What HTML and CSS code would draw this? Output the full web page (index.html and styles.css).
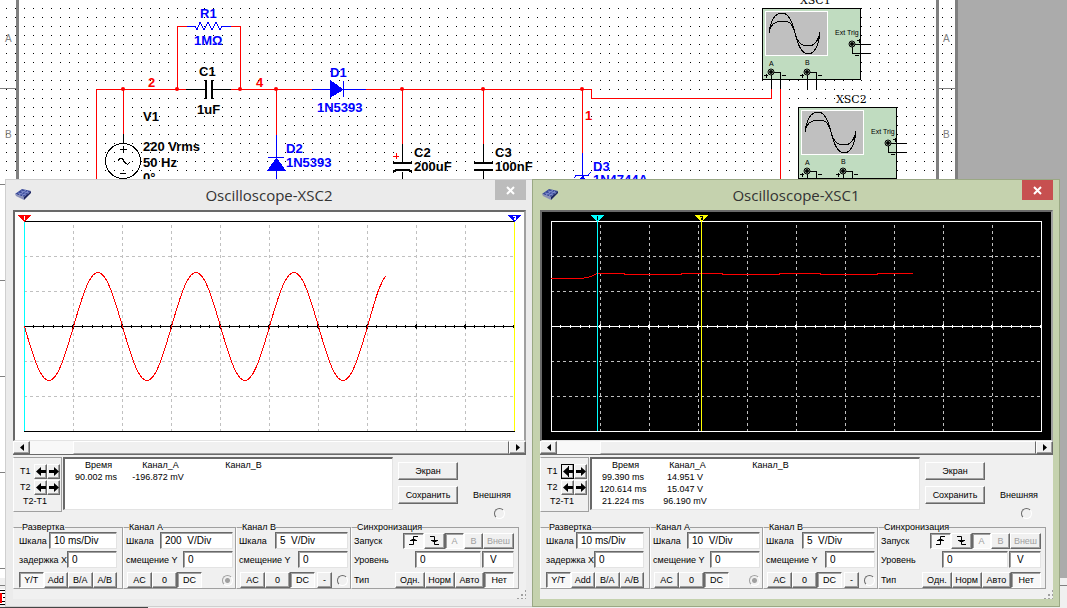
FILE: index.html
```
<!DOCTYPE html>
<html lang="ru">
<head>
<meta charset="utf-8">
<title>Oscilloscope</title>
<link rel="stylesheet" href="styles.css">
</head>

<body>
<!-- shared drawings -->
<svg class="defs" width="0" height="0">
	<defs>
		<pattern id="dots" width="9" height="9" patternUnits="userSpaceOnUse">
			<rect x="6" y="8" width="1" height="1" fill="#000"/>
		</pattern>
		<g id="jack">
			<circle r="3" fill="#c0dcc0" stroke="#000"/>
			<circle r="2" fill="#000"/>
		</g>
		<g id="scope">
			<rect x="0.5" y="0.5" width="98" height="71" fill="#c0dcc0" stroke="#000"/>
			<rect x="3.5" y="3.5" width="62" height="44" fill="#c0c0c0" stroke="#fff"/>
			<path class="crisp" d="M7 25C9 10 14 5 20 5S30 12 33 25S40 46 46 46S57 38 58 24M7 25C9 15 14 13 20 13S30 14 33 25S40 38 46 38S56 34 58 24" fill="none" stroke="#000"/>
			<text x="73" y="27" class="tiny">Ext Trig</text>
			<text x="7" y="58" class="tiny">A</text>
			<text x="43" y="57" class="tiny">B</text>
			<path class="crisp" d="M90.5 36.5H109M90.5 36.5V45.5H109M9.5 64.5V81M9.5 64.5H18.5V81M45.5 64.5V81M45.5 64.5H54.5V81M95 32.5h4M97.5 31v4M93 47.5h4M2 67.5h4M4.5 66v4M20 67.5h4M38 67.5h4M40.5 66v4M56 67.5h4" fill="none" stroke="#000"/>
			<use href="#jack" x="90" y="36"/>
			<use href="#jack" x="9" y="64"/>
			<use href="#jack" x="45" y="64"/>
		</g>
		<g id="chip">
			<path d="M0 6L7 1 16 3 9 9z" fill="#3a4a9a"/>
			<path d="M0 6L9 9V12L1 8z" fill="#8a90b8"/>
			<path d="M9 9L16 3V5L9 12z" fill="#1c2560"/>
			<path d="M3 5l8 2M6 3l8 2M4 7l7-5M7 8l6-5" stroke="#7f8ccc" fill="none"/>
		</g>
		<g id="grid">
			<path d="M57.5 12V218M106.5 12V218M155.5 12V218M204.5 12V218M253.5 12V218M302.5 12V218M351.5 12V218M400.5 12V218M449.5 12V218M8 43.5H498M8 78.5H498M8 148.5H498M8 183.5H498" stroke="#c0c0c0" stroke-dasharray="3 3"/>
		</g>
		<g id="axis">
			<path d="M8 113.5H499"/>
			<path d="M17 113.5H498" stroke-width="3" stroke-dasharray="1 8.8"/>
			<path d="M57 113.5H498" stroke-width="5" stroke-dasharray="1 48"/>
		</g>
		<path id="left" d="M0 5.500L5 1V4H10V7H5V10z"/>
		<path id="right" d="M10 5.500L5 1V4H0V7H5V10z"/>
		<path id="rise" d="M1 9.500H5.500V1.500H10M2 5.500H9M3.500 4.500H7.500" fill="none" stroke="#000"/>
		<path id="fall" d="M1 1.500H5.500V9.500H10M2 5.500H9M3.500 6.500H7.500" fill="none" stroke="#000"/>
	</defs>
</svg>

<div class="desktop">

<svg class="schematic" width="1067" height="608">
	<g class="crisp">
		<rect width="958" height="578" fill="#fff"/>
		<rect width="958" height="578" fill="url(#dots)"/>
		<path d="M17.500 0V578M937.500 0V578M956.500 0V578" stroke="#808080" stroke-width="3"/>
		<path d="M0 88.500H16M0 184.500H16M0 280.500H16M0 376.500H16M0 472.500H16M0 568.500H16M939 88.500H955" stroke="#808080"/>
		<rect y="578" width="1067" height="30" fill="#f0f0f0"/>
		<path d="M0 585.500H1067" stroke="#808080"/>
		<rect y="589" width="5" height="16" fill="#fff"/>
		<path d="M0 590.500H5M1 593.500H5M3 597.500H5M2 601.500H5M0 604.500H5" stroke="#000"/>
		<path d="M0.500 593V603" stroke="#f00" stroke-width="2"/>
		<path d="M0 607.500H147L149 605" stroke="#444" fill="none"/>
	</g>

	<g class="sheet">
		<text x="5" y="42">A</text>
		<text x="5" y="138">B</text>
		<text x="943" y="42">A</text>
		<text x="943" y="138">B</text>
	</g>

	<!-- nets -->
	<g class="crisp" fill="none" stroke="#f00">
		<path d="M96.500 180V89.500H186M231 89.500H312M366 89.500H591.500V98.500H771.500V89"/>
		<path d="M177.500 89V26.500H187M231 26.500H240.500V89M123.500 89V134M276.500 89V135M402.500 89V144M483.500 89V144M582.500 89V153M780.500 89V180"/>
		<path d="M393 156.500H399M396.500 153V159"/>
	</g>
	<g fill="#f00">
		<circle cx="123" cy="89" r="2"/>
		<circle cx="177" cy="89" r="2"/>
		<circle cx="240" cy="89" r="2"/>
		<circle cx="276" cy="89" r="2"/>
		<circle cx="402" cy="89" r="2"/>
		<circle cx="483" cy="89" r="2"/>
		<circle cx="582" cy="89" r="2"/>
	</g>

	<!-- black parts: C1, V1, C2, C3 -->
	<g class="crisp" fill="none" stroke="#000">
		<path d="M186 89.500H205M213 89.500H231M123.500 134V144M402.500 144V162M402.500 172V180M483.500 144V162M483.500 171V180"/>
		<path d="M206 80V99M212 80V99M393 163H412M474 163H493M474 170H493M393 172L396 170H409L412 172" stroke-width="2"/>
		<circle cx="123" cy="161" r="17.500"/>
		<path d="M120 149.500H127M123.500 146V153M120 173.500H126M118 161Q121 155 124 161T130 162"/>
	</g>

	<!-- blue parts: R1, D1, D2, D3 -->
	<g class="crisp" fill="none" stroke="#00f">
		<path d="M187 26.500H195L197 30 200 22 204 30 208 22 212 30 216 22 220 30 222 26.500H231"/>
		<path d="M312 89.500H366M343.500 81V97M276.500 135V180M268 157.500H284M582.500 153V180M574 178L576 175.500H588L591 172"/>
		<path d="M330.500 81V97L343 89.500zM276.500 158L268 170.500H285zM582.500 176L576 185H590z" fill="#00f"/>
	</g>

	<g class="part blue">
		<text x="200" y="18">R1</text>
		<text x="194" y="45">1MΩ</text>
		<text x="330" y="77">D1</text>
		<text x="317" y="112">1N5393</text>
		<text x="286" y="153">D2</text>
		<text x="286" y="167">1N5393</text>
		<text x="593" y="171">D3</text>
		<text x="593" y="184">1N4744A</text>
	</g>
	<g class="part">
		<text x="199" y="76">C1</text>
		<text x="197" y="114">1uF</text>
		<text x="143" y="121">V1</text>
		<text x="143" y="151">220 Vrms</text>
		<text x="143" y="167">50 Hz</text>
		<text x="143" y="182">0°</text>
		<text x="414" y="157">C2</text>
		<text x="414" y="171">200uF</text>
		<text x="495" y="157">C3</text>
		<text x="495" y="171">100nF</text>
	</g>
	<g class="part red">
		<text x="148" y="87">2</text>
		<text x="256" y="87">4</text>
		<text x="585" y="120">1</text>
	</g>

	<use href="#scope" x="762" y="8"/>
	<use href="#scope" x="798" y="107"/>
	<text class="refdes" x="800" y="4">XSC1</text>
	<text class="refdes" x="836" y="103">XSC2</text>
</svg>

<div class="window xsc2">
	<div class="titlebar">
		<svg class="appicon" width="16" height="13"><use href="#chip"/></svg>
		<div class="title">Oscilloscope-XSC2</div>
		<button class="close" aria-label="Close"><svg width="9" height="9"><path d="M1 1L8 8M8 1L1 8" stroke="#fff" stroke-width="2"/></svg></button>
	</div>
	<div class="client">
		<div class="plot">
			<svg class="crisp" viewBox="0 0 507 227">
				<use href="#grid"/>
				<path d="M8 8.500H499M8 218.500H499" stroke="#000"/>
				<use href="#axis" stroke="#000"/>
				<path d="M8.500 9V218" stroke="#0ff"/>
				<path d="M498.500 9V218" stroke="#ff0"/>
				<path d="M2 2H15L8.500 9z" fill="#f00"/>
				<path d="M8.500 3V7" stroke="#fff"/>
				<path d="M492 2H505L498.500 9z" fill="#00f"/>
				<path d="M497 3.500H499.500V5.500H498V6.500H500" stroke="#fff" fill="none"/>
				<path d="M8.500 113.500c8 27.700 15.600 54 24.500 54s16.500-26.300 24.500-54c8-27.700 15.600-54 24.500-54s16.500 26.300 24.500 54c8 27.700 15.600 54 24.500 54s16.500-26.300 24.500-54c8-27.700 15.600-54 24.500-54s16.500 26.300 24.500 54c8 27.700 15.600 54 24.500 54s16.500-26.300 24.500-54c8-27.700 15.600-54 24.500-54s16.500 26.300 24.500 54c8 27.700 15.600 54 24.500 54s16.500-26.300 24.500-54c6-20.800 12-44 18-50" fill="none" stroke="#f00"/>
			</svg>
		</div>
		<div class="scrollbar">
			<button class="btn" aria-label="Scroll left"><svg width="4" height="7"><path d="M4 0V7L0 3.500z"/></svg></button>
			<div class="track"></div>
			<div class="thumb"></div>
			<button class="btn" aria-label="Scroll right"><svg width="4" height="7"><path d="M0 0V7L4 3.500z"/></svg></button>
		</div>

		<div class="info">
			<div class="cursors">
				<span>T1</span>
				<button class="btn" aria-label="T1 left"><svg width="10" height="11"><use href="#left"/></svg></button>
				<button class="btn" aria-label="T1 right"><svg width="10" height="11"><use href="#right"/></svg></button>
				<span>T2</span>
				<button class="btn" aria-label="T2 left"><svg width="10" height="11"><use href="#left"/></svg></button>
				<button class="btn" aria-label="T2 right"><svg width="10" height="11"><use href="#right"/></svg></button>
				<span class="diff">T2-T1</span>
			</div>
			<div class="readout">
				<table>
					<tr><th>Время</th><th>Канал_A</th><th>Канал_B</th></tr>
					<tr><td>90.002 ms</td><td>-196.872 mV</td><td></td></tr>
				</table>
			</div>
			<div class="actions">
				<button class="btn">Экран</button>
				<button class="btn">Сохранить</button>
			</div>
			<label class="external">Внешняя<input type="radio" name="in2"></label>
		</div>

		<div class="groups">
			<fieldset>
				<legend>Развертка</legend>
				<label class="row">Шкала<input class="scale" value="10 ms/Div"></label>
				<label class="row">задержка X<input class="offset" value="0"></label>
				<div class="row keys">
					<button class="btn on">Y/T</button>
					<button class="btn">Add</button>
					<button class="btn">B/A</button>
					<button class="btn">A/B</button>
				</div>
			</fieldset>
			<fieldset>
				<legend>Канал A</legend>
				<label class="row">Шкала<input class="scale" value="200  V/Div"></label>
				<label class="row">смещение Y<input class="offset" value="0"></label>
				<div class="row keys coupling">
					<button class="btn">AC</button>
					<button class="btn">0</button>
					<button class="btn on">DC</button>
					<input type="radio" name="in2" aria-label="Канал A" checked>
				</div>
			</fieldset>
			<fieldset>
				<legend>Канал B</legend>
				<label class="row">Шкала<input class="scale" value="5  V/Div"></label>
				<label class="row">смещение Y<input class="offset" value="0"></label>
				<div class="row keys coupling">
					<button class="btn">AC</button>
					<button class="btn">0</button>
					<button class="btn on">DC</button>
					<button class="btn minus">-</button>
					<input type="radio" name="in2" aria-label="Канал B">
				</div>
			</fieldset>
			<fieldset class="sync">
				<legend>Синхронизация</legend>
				<div class="row keys">
					<span>Запуск</span>
					<button class="btn on edge" aria-label="Rising"><svg width="11" height="11"><use href="#rise"/></svg></button>
					<button class="btn edge" aria-label="Falling"><svg width="11" height="11"><use href="#fall"/></svg></button>
					<button class="btn on src" disabled>A</button>
					<button class="btn src" disabled>B</button>
					<button class="btn" disabled>Внеш</button>
				</div>
				<div class="row">
					<label for="level2">Уровень</label>
					<input class="level" id="level2" value="0">
					<input class="unit" aria-label="V" value="V">
				</div>
				<div class="row keys">
					<span>Тип</span>
					<button class="btn">Одн.</button>
					<button class="btn">Норм</button>
					<button class="btn">Авто</button>
					<button class="btn on">Нет</button>
				</div>
			</fieldset>
		</div>
		<div class="grip"></div>
	</div>
</div>

<div class="window xsc1 active">
	<div class="titlebar">
		<svg class="appicon" width="16" height="13"><use href="#chip"/></svg>
		<div class="title">Oscilloscope-XSC1</div>
		<button class="close" aria-label="Close"><svg width="9" height="9"><path d="M1 1L8 8M8 1L1 8" stroke="#fff" stroke-width="2"/></svg></button>
	</div>
	<div class="client">
		<div class="plot dark">
			<svg class="crisp" viewBox="0 0 507 227">
				<use href="#grid"/>
				<rect x="8.500" y="8.500" width="490" height="210" fill="none" stroke="#fff"/>
				<use href="#axis" stroke="#fff"/>
				<path d="M8 65.500H39L48 63.500 54 60.500H81V61.500H138V60.500H179V61.500H236V60.500H277V61.500H334V60.500H370" fill="none" stroke="#f00"/>
				<path d="M54.500 8V218" stroke="#0ff"/>
				<path d="M158.500 8V218" stroke="#ff0"/>
				<path d="M48 2H61L54.500 9z" fill="#0ff"/>
				<path d="M54.500 3V7" stroke="#000"/>
				<path d="M152 2H165L158.500 9z" fill="#ff0"/>
				<path d="M157 3.500H159.500V5.500H158V6.500H160" stroke="#000" fill="none"/>
			</svg>
		</div>
		<div class="scrollbar">
			<button class="btn" aria-label="Scroll left"><svg width="4" height="7"><path d="M4 0V7L0 3.500z"/></svg></button>
			<div class="track"></div>
			<div class="thumb"></div>
			<button class="btn" aria-label="Scroll right"><svg width="4" height="7"><path d="M0 0V7L4 3.500z"/></svg></button>
		</div>

		<div class="info">
			<div class="cursors">
				<span>T1</span>
				<button class="btn focus" aria-label="T1 left"><svg width="10" height="11"><use href="#left"/><path d="M5.500 0V11" stroke="#000"/></svg></button>
				<button class="btn" aria-label="T1 right"><svg width="10" height="11"><use href="#right"/></svg></button>
				<span>T2</span>
				<button class="btn" aria-label="T2 left"><svg width="10" height="11"><use href="#left"/></svg></button>
				<button class="btn" aria-label="T2 right"><svg width="10" height="11"><use href="#right"/></svg></button>
				<span class="diff">T2-T1</span>
			</div>
			<div class="readout">
				<table>
					<tr><th>Время</th><th>Канал_A</th><th>Канал_B</th></tr>
					<tr><td>99.390 ms</td><td>14.951 V</td><td></td></tr>
					<tr><td>120.614 ms</td><td>15.047 V</td><td></td></tr>
					<tr><td>21.224 ms</td><td>96.190 mV</td><td></td></tr>
				</table>
			</div>
			<div class="actions">
				<button class="btn">Экран</button>
				<button class="btn">Сохранить</button>
			</div>
			<label class="external">Внешняя<input type="radio" name="in1"></label>
		</div>

		<div class="groups">
			<fieldset>
				<legend>Развертка</legend>
				<label class="row">Шкала<input class="scale" value="10 ms/Div"></label>
				<label class="row">задержка X<input class="offset" value="0"></label>
				<div class="row keys">
					<button class="btn on">Y/T</button>
					<button class="btn">Add</button>
					<button class="btn">B/A</button>
					<button class="btn">A/B</button>
				</div>
			</fieldset>
			<fieldset>
				<legend>Канал A</legend>
				<label class="row">Шкала<input class="scale" value="10  V/Div"></label>
				<label class="row">смещение Y<input class="offset" value="0"></label>
				<div class="row keys coupling">
					<button class="btn">AC</button>
					<button class="btn">0</button>
					<button class="btn on">DC</button>
					<input type="radio" name="in1" aria-label="Канал A" checked>
				</div>
			</fieldset>
			<fieldset>
				<legend>Канал B</legend>
				<label class="row">Шкала<input class="scale" value="5  V/Div"></label>
				<label class="row">смещение Y<input class="offset" value="0"></label>
				<div class="row keys coupling">
					<button class="btn">AC</button>
					<button class="btn">0</button>
					<button class="btn on">DC</button>
					<button class="btn minus">-</button>
					<input type="radio" name="in1" aria-label="Канал B">
				</div>
			</fieldset>
			<fieldset class="sync">
				<legend>Синхронизация</legend>
				<div class="row keys">
					<span>Запуск</span>
					<button class="btn on edge" aria-label="Rising"><svg width="11" height="11"><use href="#rise"/></svg></button>
					<button class="btn edge" aria-label="Falling"><svg width="11" height="11"><use href="#fall"/></svg></button>
					<button class="btn on src" disabled>A</button>
					<button class="btn src" disabled>B</button>
					<button class="btn" disabled>Внеш</button>
				</div>
				<div class="row">
					<label for="level1">Уровень</label>
					<input class="level" id="level1" value="0">
					<input class="unit" aria-label="V" value="V">
				</div>
				<div class="row keys">
					<span>Тип</span>
					<button class="btn">Одн.</button>
					<button class="btn">Норм</button>
					<button class="btn">Авто</button>
					<button class="btn on">Нет</button>
				</div>
			</fieldset>
		</div>
		<div class="grip"></div>
	</div>
</div>

</div>
</body>
</html>
```
FILE: styles.css
```
* {
	box-sizing: border-box;
}
body {
	margin: 0;
	font: 9px/12px "Liberation Sans", Arial, sans-serif;
	color: #000;
}
button, input {
	font: inherit;
	color: inherit;
	margin: 0;
	padding: 0;
}
svg {
	display: block;
}
.defs {
	position: absolute;
}
.desktop {
	position: relative;
	height: 100vh;
	overflow: hidden;
	background: #ababab;
}

/* schematic */
.crisp {
	shape-rendering: crispEdges;
}
.tiny {
	font-size: 7px;
}
.sheet {
	font-size: 10px;
	fill: #808080;
}
.part {
	font-size: 13px;
	font-weight: bold;
}
.blue {
	fill: #00f;
}
.red {
	fill: #f00;
}
.refdes {
	font: 11px "DejaVu Serif", serif;
}

/* windows */
.window {
	position: absolute;
	top: 179px;
	width: 528px;
	padding: 0 6px 7px 7px;
	background: #ebebeb;
	border: 1px solid #cfcfcf;
}
.xsc2 {
	left: 5px;
}
.xsc1 {
	left: 532px;
}
.active {
	background: #c5d2ae;
	border-color: #9aa884;
}
.titlebar {
	display: flex;
	height: 30px;
	padding-left: 2px;
}
.appicon {
	margin: 8px 12px 0 0;
}
.title {
	flex: 1;
	text-align: center;
	font: 15px/30px "Open Sans", "Noto Sans", sans-serif;
	color: #333;
}
.close {
	display: flex;
	align-items: center;
	justify-content: center;
	width: 31px;
	height: 20px;
	border: 0;
	background: #bcbcbc;
}
.active .close {
	background: #c75050;
}
.client {
	background: #f0f0f0;
}
.plot {
	padding: 1px 1px 0 1px;
	border: 2px solid #696969;
	border-right-color: #a0a0a0;
	border-bottom: 1px solid #e3e3e3;
	background: #fff;
}
.dark {
	background: #000;
}

/* controls */
.btn {
	display: flex;
	align-items: center;
	justify-content: center;
	background: #f0f0f0;
	border: 1px solid #fff;
	border-right-color: #696969;
	border-bottom-color: #696969;
	box-shadow: inset -1px -1px #a0a0a0;
	white-space: nowrap;
}
.on {
	background: #f8f8f8;
	border-color: #696969 #fff #fff #696969;
	box-shadow: inset 1px 1px #a0a0a0;
}
.focus {
	border-color: #000;
}
.btn:disabled {
	color: #a0a0a0;
}
input {
	min-width: 0;
	height: 17px;
	padding-left: 4px;
	font-size: 10px;
	background: #fff;
	border: 1px solid #696969;
	border-right-color: #e3e3e3;
	border-bottom-color: #e3e3e3;
	box-shadow: inset 1px 1px #a0a0a0;
	white-space: pre;
}
input[type=radio] {
	appearance: none;
	width: 11px;
	height: 11px;
	padding: 0;
	border: 1px solid;
	border-color: #696969 #fff #fff #696969;
	border-radius: 50%;
	background: #f0f0f0;
	box-shadow: none;
}
input[type=radio]:checked {
	background: radial-gradient(#a0a0a0 2px, #f0f0f0 3px);
	border-color: #a0a0a0 #fff #fff #a0a0a0;
}

.scrollbar {
	display: flex;
	height: 14px;
	border-bottom: 1px solid #696969;
}
.scrollbar .btn {
	width: 17px;
}
.track {
	width: 43px;
	background: #f8f8f8;
}
.thumb {
	flex: 1;
	border: 1px solid #fff;
	border-right-color: #696969;
	border-bottom-color: #a0a0a0;
}

.info {
	display: flex;
	align-items: flex-start;
	margin-top: 2px;
}
.cursors {
	display: grid;
	grid-template-columns: 14px 13px 13px;
	grid-template-rows: 16px 16px 12px;
	align-items: center;
	width: 49px;
	height: 55px;
	padding: 5px 0 0 6px;
	border: 1px solid #a0a0a0;
	border-left-color: #fff;
}
.cursors .btn {
	width: 100%;
	height: 15px;
}
.diff {
	grid-column: 1 / 4;
	padding-left: 3px;
}
.readout {
	width: 330px;
	height: 53px;
	margin-left: 1px;
	background: #fff;
	border: 2px solid #696969;
	border-right: 1px solid #e3e3e3;
	border-bottom: 1px solid #e3e3e3;
}
table {
	border-collapse: collapse;
	table-layout: fixed;
	width: 228px;
}
th, td {
	padding: 0;
	font-weight: normal;
	text-align: center;
	white-space: nowrap;
}
th {
	padding-left: 5px;
}
th:nth-child(-n+2) {
	width: 62px;
}
.actions {
	display: grid;
	gap: 6px;
	width: 60px;
	margin: 5px 0 0 5px;
}
.actions .btn {
	height: 18px;
}
.external {
	display: grid;
	justify-items: end;
	gap: 7px;
	margin: 32px 0 0 15px;
}
.external input {
	margin-right: 6px;
}

.groups {
	display: grid;
	grid-template-columns: 110fr 113fr 115fr 168fr;
	margin: 3px 7px 0 0;
}
fieldset {
	min-width: 0;
	margin: 0;
	padding: 0 5px 0;
	border: 1px solid #a0a0a0;
	border-left: 1px solid #fff;
}
fieldset:nth-child(n+2) {
	padding: 0 2px;
}
legend {
	margin-left: 3px;
	padding: 0;
	line-height: 10px;
}
.row {
	display: flex;
	align-items: center;
	justify-content: space-between;
	height: 17px;
	margin-bottom: 2px;
	white-space: nowrap;
}
.row:last-child {
	height: 16px;
	margin: 4px 0 0;
}
.keys .btn {
	flex: 1;
	height: 16px;
}
.scale {
	width: 68px;
}
fieldset:nth-child(n+2) .scale {
	width: 73px;
}
.offset {
	width: 50px;
}
.coupling {
	justify-content: flex-start;
	padding-left: 1px;
}
.coupling .btn {
	flex: 0 0 25px;
}
.coupling .minus {
	flex-basis: 15px;
	margin-left: 2px;
}
.coupling input {
	margin-left: auto;
}
.sync .row {
	margin-right: 2px;
	justify-content: flex-start;
}
.sync span, .sync label {
	width: 41px;
}
.sync span:has(+ .edge) {
	width: 49px;
}
.sync .edge {
	flex: 0 0 21px;
}
.sync .src {
	flex: 0 0 19px;
}
.sync .level {
	flex: 1;
	margin-left: 20px;
}
.sync .unit {
	width: 32px;
	margin-left: 1px;
	padding-left: 7px;
}
.grip {
	width: 10px;
	height: 10px;
	margin-left: auto;
	background: radial-gradient(#a0a0a0 1px, transparent 1px) 0 0 / 4px 4px;
	clip-path: polygon(100% 0, 100% 100%, 0 100%);
}
```
